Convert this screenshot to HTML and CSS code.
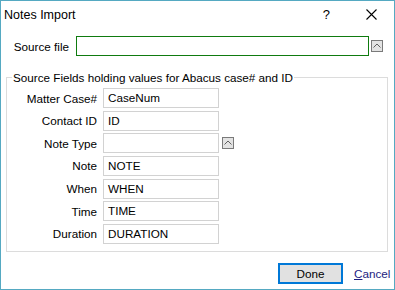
FILE: index.html
```html
<!DOCTYPE html>
<html lang="en">
<head>
    <meta charset="UTF-8">
    <title>Notes Import</title>
    <link rel="stylesheet" href="styles.css">
</head>
<body>
    <div class="window">
        <div class="titlebar">
            <span class="title">Notes Import</span>
            <span class="help">?</span>
            <svg class="close" width="11" height="11" viewBox="0 0 11 11">
                <path d="M0.5 0.5 L10.5 10.5 M10.5 0.5 L0.5 10.5" stroke="#000" stroke-width="1.1" fill="none"/>
            </svg>
        </div>

        <div class="source-row">
            <label class="source-label">Source file</label>
            <div class="field source-field"></div>
            <div class="pick"><svg width="10" height="10" viewBox="0 0 10 10"><path d="M1.5 6.5 L5 3 L8.5 6.5" stroke="#606060" fill="none"/></svg></div>
        </div>

        <fieldset class="group">
            <legend>Source Fields holding values for Abacus case# and ID</legend>
            <div class="row"><label>Matter Case#</label><div class="field">CaseNum</div></div>
            <div class="row"><label>Contact ID</label><div class="field">ID</div></div>
            <div class="row"><label>Note Type</label><div class="field"></div>
                <div class="pick"><svg width="10" height="10" viewBox="0 0 10 10"><path d="M1.5 6.5 L5 3 L8.5 6.5" stroke="#606060" fill="none"/></svg></div>
            </div>
            <div class="row"><label>Note</label><div class="field">NOTE</div></div>
            <div class="row"><label>When</label><div class="field">WHEN</div></div>
            <div class="row"><label>Time</label><div class="field">TIME</div></div>
            <div class="row"><label>Duration</label><div class="field">DURATION</div></div>
        </fieldset>

        <div class="footer">
            <button class="done" type="button">Done</button>
            <span class="cancel"><u>C</u>ancel</span>
        </div>
    </div>
</body>
</html>
```

FILE: styles.css
```css
body {
    margin: 0;
    font-family: "Liberation Sans", Arial, sans-serif;
    font-size: 11.7px;
    color: #000;
}
.window {
    width: 395px;
    height: 290px;
    box-sizing: border-box;
    border: 1px solid #55a9c2;
    background: #fff;
}
.titlebar {
    display: flex;
    align-items: center;
    height: 29px;
}
.title {
    margin-left: 3px;
    margin-top: -2px;
    font-size: 12.5px;
}
.help {
    margin-left: auto;
    margin-right: 36px;
    font-size: 13px;
    margin-top: -2px;
}
.close {
    margin-right: 17px;
    margin-top: -3px;
}
.source-row {
    display: flex;
    align-items: center;
    margin-top: 6px;
}
.source-label {
    width: 68px;
    text-align: right;
    margin-right: 7px;
}
.field {
    box-sizing: border-box;
    width: 116px;
    height: 20px;
    border: 1px solid #d2d2d2;
    padding-left: 4px;
    line-height: 18px;
}
.source-field {
    width: 293px;
    border-color: #0f7b0f;
}
.pick {
    box-sizing: border-box;
    width: 12px;
    height: 12px;
    margin-left: 2px;
    border: 1px solid #7a7a7a;
    background: #e3e3e3;
    display: flex;
    align-items: center;
    justify-content: center;
}
.pick svg {
    width: 10px;
    height: 10px;
}
.group {
    margin: 15px 0 0 5px;
    width: 382px;
    box-sizing: border-box;
    border: 1px solid #dcdcdc;
    padding: 4px 0 7px 0;
}
.group legend {
    padding: 0 1px;
    margin-left: 5px;
}
.row {
    display: flex;
    align-items: center;
    margin-bottom: 2.67px;
}
.row:last-child {
    margin-bottom: 0;
}
.row label {
    width: 90px;
    text-align: right;
    margin-right: 6px;
}
.row .pick {
    margin-left: 3px;
}
.footer {
    display: flex;
    align-items: center;
    margin-top: 11px;
}
.done {
    margin-left: 277px;
    width: 65px;
    height: 21px;
    box-sizing: border-box;
    border: 2px solid #0078d7;
    background: #e1e1e1;
    font: inherit;
    color: #000;
    padding: 0;
}
.cancel {
    margin-left: 11px;
    color: #1c1c80;
}
```
